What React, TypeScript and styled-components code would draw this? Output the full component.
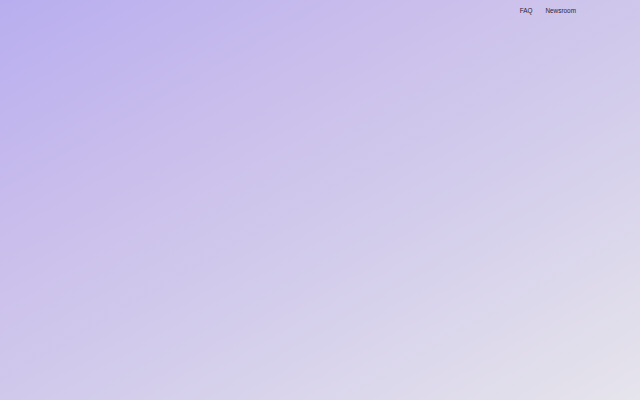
import React from 'react'
import styled, { createGlobalStyle } from 'styled-components'

const GlobalStyle = createGlobalStyle`
  html, body {
    margin: 0;
    padding: 0;
    height: 100%;
  }
  #root {
    height: 100%;
  }
`

const Page = styled.div`
  width: 100%;
  min-height: 100vh;
  background: linear-gradient(150deg, #b8aeef 0%, #c9bdec 30%, #d3cdeb 60%, #e6e4ec 100%);
  font-family: "Liberation Sans", Arial, sans-serif;
  display: flex;
  flex-direction: column;
`

const Header = styled.header`
  display: flex;
  justify-content: flex-end;
  padding: 5px 64px 0 0;
`

const Nav = styled.nav`
  display: flex;
  align-items: center;
  gap: 13px;
`

const NavLink = styled.a`
  font-size: 6.4px;
  line-height: 10px;
  padding-top: 1px;
  color: #2a2540;
  text-decoration: none;
  cursor: pointer;
`

export default function App() {
    return (
        <>
            <GlobalStyle />
            <Page>
                <Header>
                    <Nav>
                        <NavLink>FAQ</NavLink>
                        <NavLink>Newsroom</NavLink>
                    </Nav>
                </Header>
            </Page>
        </>
    )
}
